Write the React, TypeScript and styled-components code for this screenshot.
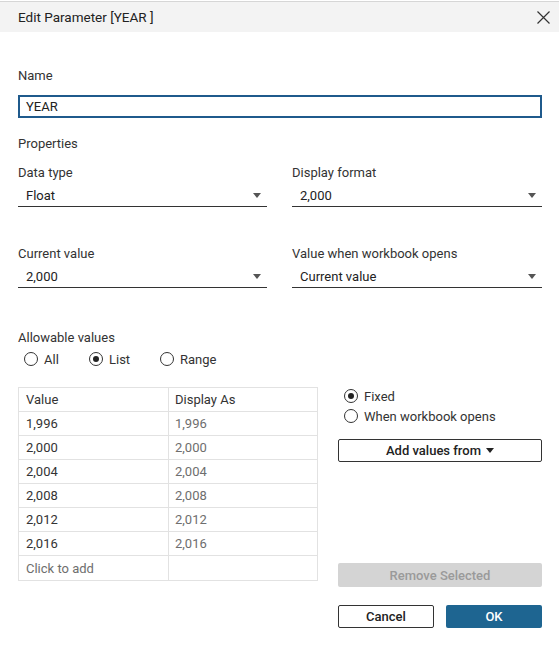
import React from "react";
import styled, { createGlobalStyle } from "styled-components";

const GlobalStyle = createGlobalStyle`
  html, body { margin: 0; padding: 0; background: #fff; }
  body { font-family: Roboto, "Noto Sans", "Liberation Sans", sans-serif; color: #333; }
  * { box-sizing: border-box; }
`;

const Dialog = styled.div`
  width: 559px;
  height: 648px;
  padding-top: 1px;
  background: #fff;
`;

const TitleBar = styled.div`
  height: 31px;
  border-top: 1px solid #d6d6d6;
  background: #f3f3f3;
  display: flex;
  align-items: center;
  justify-content: space-between;
  padding: 0 8px 0 18px;
  font-size: 13.5px;
  color: #222;
`;

const CloseBtn = styled.button`
  width: 16px;
  height: 16px;
  padding: 0;
  border: none;
  background: transparent;
  display: flex;
  align-items: center;
  justify-content: center;
`;

const Body = styled.div`
  padding: 36px 17px 0 18px;
`;

const Label = styled.div<{ $mt?: number }>`
  font-size: 13px;
  line-height: 16px;
  color: #333;
  margin-top: ${(p) => p.$mt ?? 0}px;
`;

const NameInput = styled.div`
  margin-top: 11px;
  height: 23px;
  border: 2px solid #1f5a8c;
  padding-left: 6px;
  display: flex;
  align-items: center;
  font-size: 13px;
  color: #222;
`;

const FieldGrid = styled.div<{ $mt: number }>`
  display: grid;
  grid-template-columns: 249px 250px;
  column-gap: 25px;
  margin-top: ${(p) => p.$mt}px;
`;

const Field = styled.div``;

const Select = styled.div`
  margin-top: 3px;
  height: 23px;
  border-bottom: 1px solid #333;
  display: flex;
  align-items: center;
  justify-content: space-between;
  padding: 0 6px 0 8px;
  font-size: 13px;
  color: #222;
`;

const Caret = styled.span<{ $color?: string }>`
  width: 0;
  height: 0;
  border-left: 4px solid transparent;
  border-right: 4px solid transparent;
  border-top: 5px solid ${(p) => p.$color ?? "#555"};
  display: inline-block;
`;

const RadioRow = styled.div`
  display: flex;
  align-items: center;
  margin-top: 3px;
  padding-left: 6px;
  height: 20px;
`;

const RadioItem = styled.div<{ $w?: number }>`
  display: flex;
  align-items: center;
  gap: 6px;
  font-size: 13px;
  color: #333;
  width: ${(p) => (p.$w ? `${p.$w}px` : "auto")};
`;

const Circle = styled.span<{ $on?: boolean }>`
  width: 14px;
  height: 14px;
  border-radius: 50%;
  border: 1px solid #333;
  display: inline-flex;
  align-items: center;
  justify-content: center;
  flex: none;
  &::after {
    content: "";
    width: 6px;
    height: 6px;
    border-radius: 50%;
    background: ${(p) => (p.$on ? "#222" : "transparent")};
  }
`;

const Lower = styled.div`
  display: grid;
  grid-template-columns: 300px 204px;
  column-gap: 20px;
  margin-top: 17px;
  align-items: start;
`;

const Table = styled.div`
  margin-top: 1px;
  border: 1px solid #e2e2e2;
  display: grid;
  grid-template-columns: 149px 1fr;
`;

const Cell = styled.div<{ $muted?: boolean; $last?: boolean; $right?: boolean }>`
  height: 24px;
  padding-left: ${(p) => (p.$right ? 6 : 7)}px;
  display: flex;
  align-items: center;
  font-size: 13px;
  color: ${(p) => (p.$muted ? "#6e6e6e" : "#333")};
  border-bottom: ${(p) => (p.$last ? "none" : "1px solid #e2e2e2")};
  border-left: ${(p) => (p.$right ? "1px solid #e2e2e2" : "none")};
`;

const Side = styled.div`
  display: flex;
  flex-direction: column;
`;

const SideRadio = styled(RadioItem)`
  height: 20px;
  padding-left: 6px;
`;

const OutlineButton = styled.button<{ $w?: number }>`
  height: 23px;
  width: ${(p) => (p.$w ? `${p.$w}px` : "100%")};
  border: 1px solid #333;
  border-radius: 2px;
  background: #fff;
  font-family: inherit;
  font-size: 13px;
  font-weight: 500;
  color: #222;
  display: flex;
  align-items: center;
  justify-content: center;
  gap: 5px;
  padding: 0;
`;

const AddButton = styled(OutlineButton)`
  margin-top: 13px;
`;

const DisabledButton = styled.button`
  margin-top: 101px;
  height: 24px;
  width: 100%;
  border: none;
  border-radius: 2px;
  background: #d4d4d4;
  font-family: inherit;
  font-size: 13px;
  font-weight: 500;
  color: #9a9a9a;
  padding: 0;
`;

const Footer = styled.div`
  display: flex;
  justify-content: flex-end;
  gap: 12px;
  margin-top: 18px;
`;

const PrimaryButton = styled.button`
  height: 23px;
  width: 96px;
  border: none;
  border-radius: 2px;
  background: #1e6591;
  color: #fff;
  font-family: inherit;
  font-size: 13px;
  font-weight: 500;
  padding: 0;
`;

const rows = ["1,996", "2,000", "2,004", "2,008", "2,012", "2,016"];

export default function App() {
  return (
    <>
      <GlobalStyle />
      <Dialog>
        <TitleBar>
          <span>Edit Parameter [YEAR ]</span>
          <CloseBtn aria-label="Close">
            <svg width="13" height="13" viewBox="0 0 13 13">
              <path d="M0.5 0.5 L12.5 12.5 M12.5 0.5 L0.5 12.5" stroke="#333" strokeWidth="1.2" />
            </svg>
          </CloseBtn>
        </TitleBar>
        <Body>
          <Label>Name</Label>
          <NameInput>YEAR</NameInput>
          <Label $mt={18}>Properties</Label>
          <FieldGrid $mt={13}>
            <Field>
              <Label>Data type</Label>
              <Select>
                <span>Float</span>
                <Caret />
              </Select>
            </Field>
            <Field>
              <Label>Display format</Label>
              <Select>
                <span>2,000</span>
                <Caret />
              </Select>
            </Field>
          </FieldGrid>
          <FieldGrid $mt={39}>
            <Field>
              <Label>Current value</Label>
              <Select>
                <span>2,000</span>
                <Caret />
              </Select>
            </Field>
            <Field>
              <Label>Value when workbook opens</Label>
              <Select>
                <span>Current value</span>
                <Caret />
              </Select>
            </Field>
          </FieldGrid>
          <Label $mt={42}>Allowable values</Label>
          <RadioRow>
            <RadioItem $w={65}>
              <Circle />
              All
            </RadioItem>
            <RadioItem $w={71}>
              <Circle $on />
              List
            </RadioItem>
            <RadioItem>
              <Circle />
              Range
            </RadioItem>
          </RadioRow>
          <Lower>
            <Table>
              <Cell>Value</Cell>
              <Cell $right>Display As</Cell>
              {rows.map((r) => (
                <React.Fragment key={r}>
                  <Cell>{r}</Cell>
                  <Cell $right $muted>
                    {r}
                  </Cell>
                </React.Fragment>
              ))}
              <Cell $muted $last>
                Click to add
              </Cell>
              <Cell $right $last />
            </Table>
            <Side>
              <SideRadio>
                <Circle $on />
                Fixed
              </SideRadio>
              <SideRadio>
                <Circle />
                When workbook opens
              </SideRadio>
              <AddButton>
                Add values from <Caret $color="#222" />
              </AddButton>
              <DisabledButton disabled>Remove Selected</DisabledButton>
            </Side>
          </Lower>
          <Footer>
            <OutlineButton $w={96}>Cancel</OutlineButton>
            <PrimaryButton>OK</PrimaryButton>
          </Footer>
        </Body>
      </Dialog>
    </>
  );
}
